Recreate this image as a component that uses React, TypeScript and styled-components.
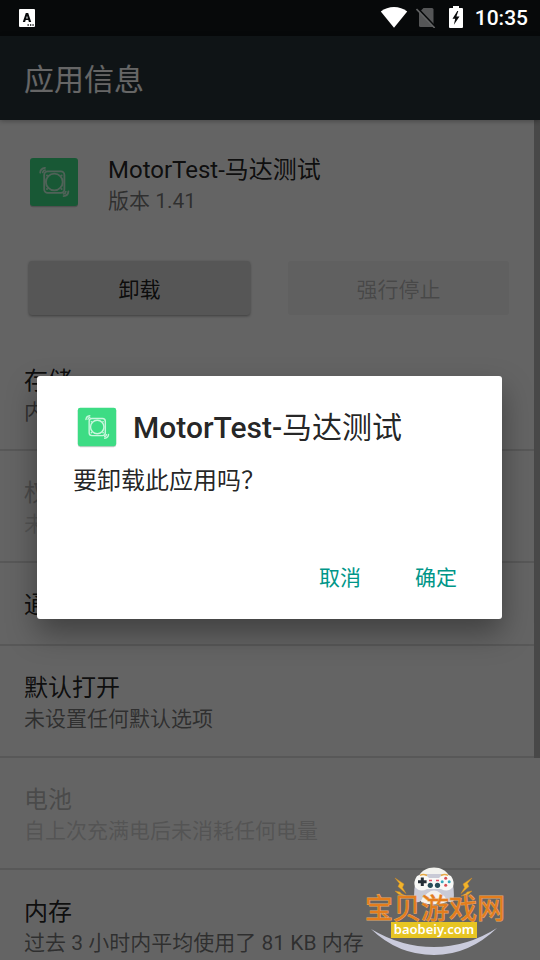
import React from "react";
import styled, { createGlobalStyle } from "styled-components";

const Global = createGlobalStyle`
  * { box-sizing: border-box; }
  body {
    margin: 0;
    background: #fafafa;
    font-family: Roboto, "Noto Sans CJK SC", sans-serif;
    color: rgba(0, 0, 0, 0.87);
  }
  h1, h2, p { margin: 0; font-weight: 400; }
`;

const Screen = styled.div`
  display: flex;
  flex-direction: column;
  height: 100vh;
  overflow: hidden;
  position: relative;
`;

const StatusBar = styled.header`
  display: flex;
  align-items: center;
  justify-content: space-between;
  flex: none;
  height: 36px;
  padding: 0 12px 0 19px;
  background: #07090a;
  color: #fff;
`;

const StatusIcons = styled.div`
  display: flex;
  align-items: center;
`;

const IconGroup = styled.div`
  display: flex;
  align-items: center;
  gap: 8px;
  padding-bottom: 2px;
  svg:last-child { margin-left: 5px; }
`;

const Clock = styled.time`
  margin-left: 12px;
  font-size: 21px;
  font-weight: 500;
  line-height: 36px;
`;

const Stage = styled.div`
  position: relative;
  flex: 1;
  min-height: 0;
  display: flex;
  flex-direction: column;
`;

const AppBar = styled.div`
  display: flex;
  align-items: center;
  flex: none;
  height: 84px;
  padding: 4px 24px 0;
  background: #263238;
  box-shadow: 0 1px 5px rgba(0, 0, 0, 0.3);
  z-index: 1;
`;

const AppBarTitle = styled.h1`
  font-size: 30px;
  line-height: 40px;
  color: #fff;
`;

const Content = styled.main`
  position: relative;
  flex: 1;
  min-height: 0;
  overflow: hidden;
`;

const ScrollThumb = styled.div`
  position: absolute;
  top: 0;
  right: 0;
  width: 6px;
  height: 76%;
  background: #b4b4b4;
`;

const AppSummary = styled.section`
  display: flex;
  align-items: flex-start;
  gap: 24px;
  padding: 32px 24px 0;
`;

const SummaryText = styled.div`
  padding-top: 2px;
`;

const PrimaryText = styled.h2`
  font-size: 24px;
  line-height: 33px;
`;

const SecondaryText = styled.p`
  font-size: 21px;
  line-height: 29px;
  color: rgba(0, 0, 0, 0.54);
`;

const ActionRow = styled.div`
  display: flex;
  gap: 38px;
  padding: 45px 31px 24px 29px;
`;

const ActionButton = styled.button`
  flex: 1;
  height: 54px;
  padding: 0;
  border: 0;
  border-radius: 3px;
  background: #d6d7d7;
  box-shadow: 0 1px 3px rgba(0, 0, 0, 0.4);
  font: inherit;
  font-size: 21px;
  color: rgba(0, 0, 0, 0.87);
  &:disabled {
    background: #f0f0f0;
    box-shadow: none;
    color: rgba(0, 0, 0, 0.26);
  }
`;

const Item = styled.section<{ $dim?: boolean }>`
  padding: 26px 24px 22px;
  border-bottom: 2px solid rgba(0, 0, 0, 0.12);
  & > * { opacity: ${(p) => (p.$dim ? 0.3 : 1)}; }
`;

const Scrim = styled.div`
  position: absolute;
  inset: 0;
  z-index: 2;
  display: flex;
  align-items: center;
  padding: 0 38px 2px 37px;
  background: rgba(0, 0, 0, 0.6);
`;

const Dialog = styled.section`
  flex: 1;
  padding: 27px 18px 16px 36px;
  border-radius: 3px;
  background: #fff;
  box-shadow: 0 14px 30px rgba(0, 0, 0, 0.36);
`;

const DialogHeader = styled.div`
  display: flex;
  align-items: center;
  gap: 12px;
`;

const DialogTitle = styled.h2`
  padding-top: 2px;
  font-size: 30px;
  line-height: 46px;
`;

const Latin = styled.span`
  font-weight: 500;
`;

const Message = styled.p`
  margin: 13px 0 51px;
  font-size: 24px;
  line-height: 34px;
`;

const DialogActions = styled.div`
  display: flex;
  justify-content: flex-end;
`;

const TextButton = styled.button`
  min-width: 96px;
  height: 54px;
  padding: 0 12px;
  border: 0;
  background: none;
  font: inherit;
  font-size: 21px;
  color: #009688;
`;

const Watermark = styled.div`
  position: absolute;
  right: 28px;
  bottom: 0;
  z-index: 3;
  line-height: 0;
`;

const AppIcon = ({ size }: { size: number }) => (
  <svg width={size} height={size} viewBox="0 0 60 60" fill="none" aria-hidden="true">
    <rect x="6" y="7.2" width="48" height="48" rx="3" fill="#000" opacity=".2" />
    <rect x="6" y="6" width="48" height="48" rx="3" fill="#3ddc84" />
    <g stroke="#c9f6dd" strokeLinecap="round">
      <rect x="20.2" y="19.4" width="20.2" height="21.4" rx="3.5" strokeWidth="1.8" />
      <circle cx="30.3" cy="30" r="8.4" strokeWidth="1.8" />
      <path d="M23 23.4v.1M37.6 23.4v.1M23 37v.1M37.6 37v.1" strokeWidth="2" />
      <path d="M16.2 20.6c.2-3 1.700-4.400 4.800-4.700M18.800 20.300c.2-1.400.8-2 2.200-2.200M44.400 39.400c-.2 3-1.700 4.400-4.800 4.700M41.800 39.700c-.2 1.400-.8 2-2.200 2.200" strokeWidth="1.800" />
    </g>
  </svg>
);

const KeyboardIcon = () => (
  <svg width="16" height="18" viewBox="0 0 16 18" aria-hidden="true">
    <rect width="16" height="18" rx="1" fill="#fff" />
    <path fillRule="evenodd" d="M3.8 13 6.8 4h2.4l3 9H9.9l-.6-1.9H6.7L6.1 13zM7.2 9.4h1.6L8 6.7z" fill="#07090a" />
    <path d="M8.5 16h1.3M11 16h1.3M13.4 16h1.3" stroke="#07090a" strokeWidth="1.3" />
  </svg>
);

const WifiIcon = () => (
  <svg width="28" height="22" viewBox="0 0 28 22" aria-hidden="true">
    <path d="M.8 5.6C8-.6 20-.6 27.2 5.6L14 21.700z" fill="#fff" />
  </svg>
);

const NoSimIcon = () => (
  <svg width="20" height="22" viewBox="0 0 20 22" aria-hidden="true">
    <path d="M7.500 2H16q1.500 0 1.500 1.500V21H4.500q-1.500 0-1.500-1.500V6.500z" fill="#555657" />
    <path d="M1.600 2.200 20 21.600" stroke="#07090a" strokeWidth="2" />
    <path d="M.5 3 18.700 22" stroke="#626364" strokeWidth="1.600" />
  </svg>
);

const BatteryIcon = () => (
  <svg width="14" height="22" viewBox="0 0 14 22" aria-hidden="true">
    <path d="M4 0h6v2h3q1 0 1 1v18q0 1-1 1H1q-1 0-1-1V3q0-1 1-1h3z" fill="#fff" />
    <path d="M8.300 5 3.500 12.800h2.700L4.900 18.800l5.600-8.300H7.400L9.300 5z" fill="#07090a" />
  </svg>
);

const SiteLogo = () => (
  <svg width="150" height="96" viewBox="0 0 150 96" role="img" aria-label="宝贝游戏网 baobeiy.com">
    <path d="M9 65Q39 83 72 83 105 83 135 64 107 91 72 91 36 91 9 65Z" fill="#cacbdc" />
    <path d="M72 3.500c7 0 12 3 15 8v25q-15 5-30 0v-25c3-5 8-8 15-8z" fill="#f2f2ee" />
    <path d="M55 13q3-3 9-3h16q6 0 9 3 4 12 2.500 24-4 3-7-1-12.500-19-25 0-3 4-7 1-1.500-12 2.500-24z" fill="#c9cad6" />
    <path d="M59 38q1-8 13-10 12 2 13 10-13 5-26 0z" fill="#f5f2ec" />
    <path d="M55 12q5-3 10 0l2 2h10l2-2q5-3 10 0 4 6 2 11-5 6-12 2H65q-7 4-12-2-2-5 2-11z" fill="#f8f8f6" />
    <path d="M58 11.500q3-2 7 0M79 11.500q4-2 7 0" stroke="#e7aa45" strokeWidth="1.500" fill="none" />
    <path d="M60.300 13.500v8.600M56 17.800h8.600" stroke="#242d35" strokeWidth="3" />
    <g fill="#274d58"><circle cx="68.300" cy="21.300" r="2.600" /><circle cx="75.500" cy="21.300" r="2.600" /></g>
    <g fill="#37a8bd"><circle cx="80.200" cy="17.700" r="1.500" /><circle cx="87.200" cy="17.700" r="1.500" /></g>
    <g fill="#d84d54"><circle cx="83.700" cy="14.200" r="1.500" /><circle cx="83.700" cy="21.200" r="1.500" /></g>
    <path d="M67 16.500h3M74 16.500h3" stroke="#e14e62" strokeWidth="1.500" />
    <path d="m33 14 9 6-1.500 3.500 3.500 6-8-7 1.500-3zM33 27l5 1 1 1.500 5 2.500-7-1.500zM110 14l-9 6 1.500 3.500-3.500 6 8-7-1.500-3zM110 27l-5 1-1 1.500-5 2.500 7-1.500z" fill="#f1b42a" stroke="#d28a26" strokeWidth=".5" />
    <text x="3" y="55" fontFamily='"Noto Sans CJK SC", sans-serif' fontSize="28" fontWeight="400" fill="#e47d1c" stroke="#e9a867" strokeWidth="1" paintOrder="stroke">宝贝游戏网</text>
    <rect x="29" y="58" width="86" height="16" fill="#e7c523" />
    <text x="72" y="70" textAnchor="middle" fontFamily='"Noto Sans", sans-serif' fontSize="13" fontWeight="600" fill="#fff">baobeiy.com</text>
  </svg>
);

const items = [
  { title: "存储", detail: "内部存储" },
  { title: "权限", detail: "未请求", dim: true },
  { title: "通知" },
  { title: "默认打开", detail: "未设置任何默认选项" },
  { title: "电池", detail: "自上次充满电后未消耗任何电量", dim: true },
  { title: "内存", detail: "过去 3 小时内平均使用了 81 KB 内存" },
];

export default function App() {
  return (
    <Screen>
      <Global />
      <StatusBar>
        <KeyboardIcon />
        <StatusIcons>
          <IconGroup>
            <WifiIcon />
            <NoSimIcon />
            <BatteryIcon />
          </IconGroup>
          <Clock>10:35</Clock>
        </StatusIcons>
      </StatusBar>
      <Stage>
        <AppBar>
          <AppBarTitle>应用信息</AppBarTitle>
        </AppBar>
        <Content>
          <AppSummary>
            <AppIcon size={60} />
            <SummaryText>
              <PrimaryText>MotorTest-马达测试</PrimaryText>
              <SecondaryText>版本 1.41</SecondaryText>
            </SummaryText>
          </AppSummary>
          <ActionRow>
            <ActionButton type="button">卸载</ActionButton>
            <ActionButton type="button" disabled>强行停止</ActionButton>
          </ActionRow>
          {items.map((item) => (
            <Item key={item.title} $dim={item.dim}>
              <PrimaryText>{item.title}</PrimaryText>
              {item.detail && <SecondaryText>{item.detail}</SecondaryText>}
            </Item>
          ))}
          <ScrollThumb />
        </Content>
        <Scrim>
          <Dialog role="dialog" aria-modal="true" aria-labelledby="dialog-title">
            <DialogHeader>
              <AppIcon size={48} />
              <DialogTitle id="dialog-title"><Latin>MotorTest-</Latin>马达测试</DialogTitle>
            </DialogHeader>
            <Message>要卸载此应用吗？</Message>
            <DialogActions>
              <TextButton type="button">取消</TextButton>
              <TextButton type="button">确定</TextButton>
            </DialogActions>
          </Dialog>
        </Scrim>
      </Stage>
      <Watermark>
        <SiteLogo />
      </Watermark>
    </Screen>
  );
}
